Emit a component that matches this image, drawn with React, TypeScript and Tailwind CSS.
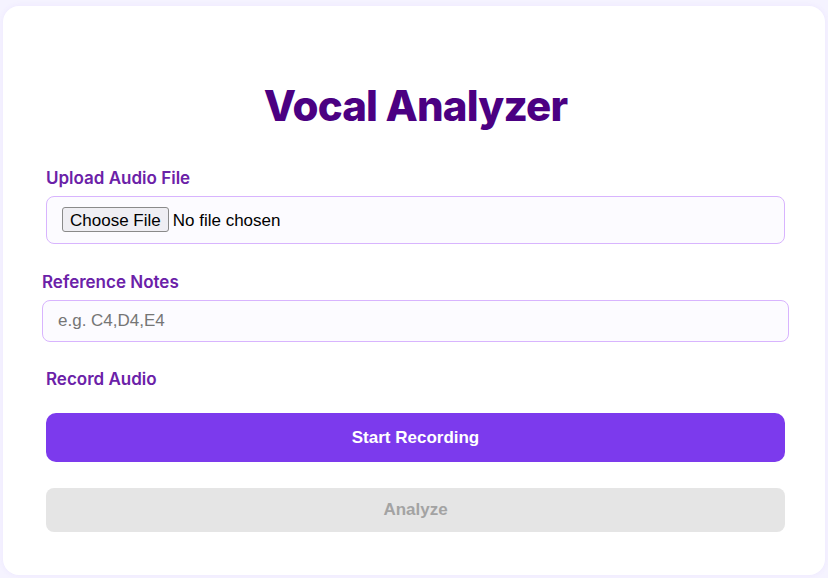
import React from "react";

export default function App() {
  return (
    <div className="min-h-screen w-[828px] h-[578px] bg-[#f5f3ff] pt-[6px] pl-[3px] overflow-hidden">
      <div
        className="w-[822px] h-[569px] bg-white rounded-[16px] shadow-[0_0_6px_rgba(124,58,237,0.06)] pl-[43px] pr-[40px] pt-[73px]"
        style={{ fontFamily: "Inter, 'Liberation Sans', sans-serif" }}
      >
        <h1 className="text-center text-[42px] leading-[53px] font-extrabold tracking-[-0.02em] text-[#4b0082]">
          Vocal Analyzer
        </h1>

        <div className="mt-[34px]">
          <label className="block text-[17px] leading-6 font-semibold text-[#6b21a8] mb-[6px]">
            Upload Audio File
          </label>
          <div className="h-[48px] border border-[#d8b4fe] rounded-[8px] bg-[#fcfbff] flex items-center pl-[15px]">
            <input
              type="file"
              accept="audio/*"
              className="text-[17px] text-black file:h-[25px] file:px-[7px] file:mr-[4px] file:border file:border-[#8a8a8a] file:rounded-[3px] file:bg-[#efeef3] file:text-black file:text-[17px]"
              style={{ fontFamily: "'Liberation Sans', Arial, sans-serif" }}
            />
          </div>
        </div>

        <div className="mt-[26px] -mx-[4px]">
          <label className="block text-[17px] leading-6 font-semibold text-[#6b21a8] mb-[6px]">
            Reference Notes
          </label>
          <input
            type="text"
            placeholder="e.g. C4,D4,E4"
            className="block w-full h-[42px] border border-[#d8b4fe] rounded-[8px] bg-[#fcfbff] px-[15px] text-[17px] text-black placeholder:text-[#757575] outline-none"
            style={{ fontFamily: "'Liberation Sans', Arial, sans-serif" }}
          />
        </div>

        <div className="mt-[25px]">
          <label className="block text-[17px] leading-6 font-semibold text-[#6b21a8]">
            Record Audio
          </label>
          <button
            className="mt-[22px] w-full h-[49px] rounded-[10px] bg-[#7c3aed] text-white text-[17px] font-bold"
            style={{ fontFamily: "'Liberation Sans', Arial, sans-serif" }}
          >
            Start Recording
          </button>
          <button
            disabled
            className="mt-[26px] w-full h-[44px] rounded-[8px] bg-[#e5e5e5] text-[#a3a3a3] text-[17px] font-bold"
            style={{ fontFamily: "'Liberation Sans', Arial, sans-serif" }}
          >
            Analyze
          </button>
        </div>
      </div>
    </div>
  );
}
